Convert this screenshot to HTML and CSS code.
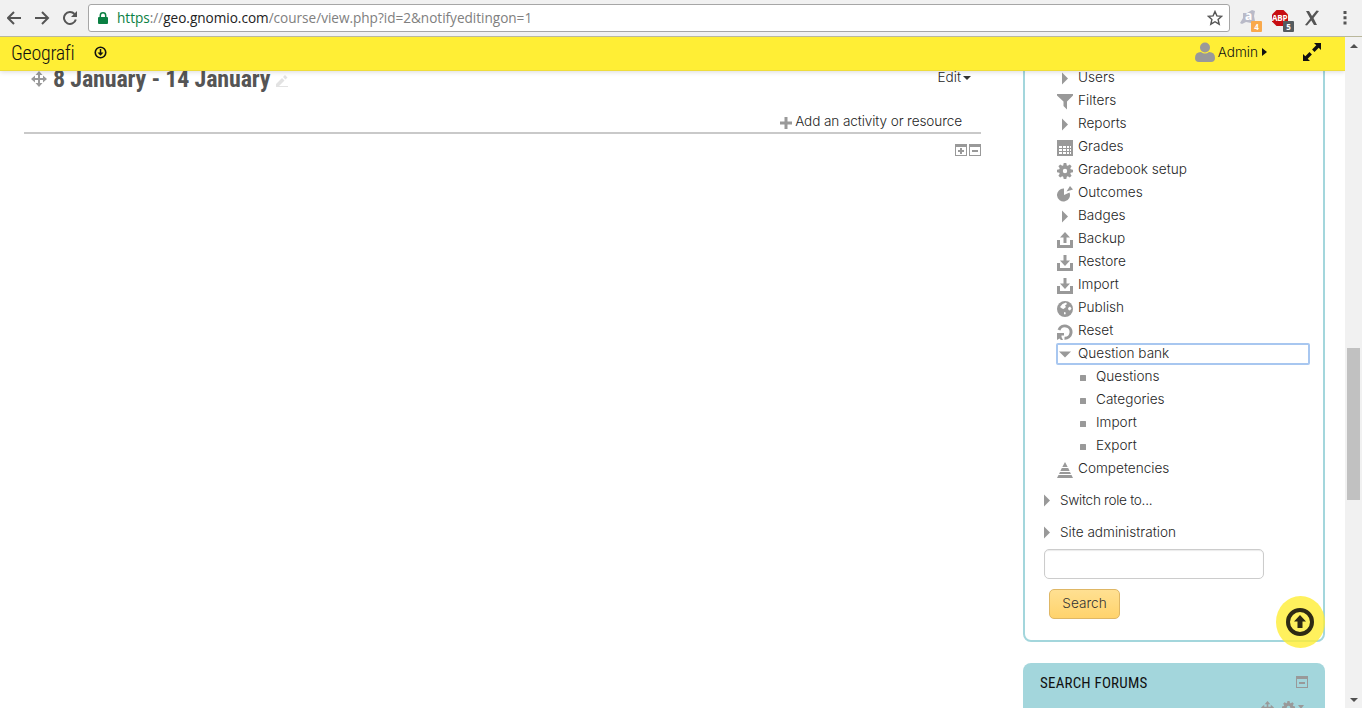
FILE: index.html
```html
<!DOCTYPE html>
<html lang="en">

<head>
  <meta charset="UTF-8">
  <title>Geografi</title>
  <link rel="stylesheet" href="styles.css">
</head>

<body>
  <svg class="symbols">
    <symbol id="right" viewBox="0 0 16 16"><path d="M5 1.500l6 6-6 6z"/></symbol>
    <symbol id="down" viewBox="0 0 16 16"><path d="M2 4.500h12L8 10.500z"/></symbol>
    <symbol id="filter" viewBox="0 0 16 16"><path d="M0 0h16v1.500l-6 6v8l-3.500-3.500V7.500L0 1.500z"/></symbol>
    <symbol id="grades" viewBox="0 0 16 16"><path fill-rule="evenodd" d="M0 0h16v16H0zM2 6v2h3V6zm4 0v2h3V6zm4 0v2h2V6zm3 0v2h1V6zM2 9v2h3V9zm4 0v2h3V9zm4 0v2h2V9zm3 0v2h1V9zM2 12v2h3v-2zm4 0v2h3v-2zm4 0v2h2v-2zm3 0v2h1v-2z"/></symbol>
    <symbol id="gear" viewBox="0 0 16 16"><path fill-rule="evenodd" d="M6.700 0h2.600l.5 2.400 1 .4 2-1.300 1.800 1.800-1.300 2 .4 1 2.300.4v2.600l-2.300.5-.4 1 1.300 2-1.800 1.800-2-1.300-1 .4-.5 2.300H6.700l-.5-2.300-1-.4-2 1.300-1.800-1.800 1.300-2-.4-1L0 9.300V6.700l2.300-.4.4-1-1.300-2 1.800-1.800 2 1.300 1-.4zM8 5.800a2.200 2.200 0 1 0 0 4.400 2.200 2.200 0 0 0 0-4.400z"/></symbol>
    <symbol id="pie" viewBox="0 0 16 16"><path d="M7 2.500V9l5.500-2.500A6.500 6.500 0 1 1 7 2.500zM9.500 5.500L13 0l3 3.500z"/></symbol>
    <symbol id="upload" viewBox="0 0 16 16"><path d="M0 8h3v5h10V8h3v8H0zM8 0l5 5.500H9.500V11h-3V5.500H3z"/></symbol>
    <symbol id="download" viewBox="0 0 16 16"><path d="M0 8h3v5h10V8h3v8H0zM8 11L3 5.500h3.500V0h3v5.500H13z"/></symbol>
    <symbol id="globe" viewBox="0 0 16 16"><circle cx="8" cy="8" r="8"/><path fill="#fff" d="M3 6l2.500-3L9 1.500l1 1.500-2 1.500 1 1.500-2.500 2L5 7.500zM11 7l2-1.500 1.500 2-1.500 2-1.500-.5zM7 11l2 .8-1 2-1-1z"/></symbol>
    <symbol id="reset" viewBox="0 0 16 16"><path fill="none" stroke="#999" stroke-width="3" d="M2 6a6.200 6.200 0 1 1 5.500 8.300"/><path d="M0 9h7v2.500H4.500V13L6 16H4l-1.500-1.500L0 16z"/></symbol>
    <symbol id="square" viewBox="0 0 16 16"><rect x="5" y="5" width="6" height="6" rx=".5"/></symbol>
    <symbol id="pyramid" viewBox="0 0 16 16"><path d="M8 0l2.700 5H5.300zM4.800 6h6.400l1.400 3H3.400zM3 10h10l1 2H2zM1.500 13h13L16 16H0z"/></symbol>
    <symbol id="move" viewBox="0 0 16 16"><path d="M8 0l3.500 4H9v3h3V4.500L16 8l-4 3.500V9H9v3h2.500L8 16l-3.500-4H7V9H4v2.500L0 8l4-3.500V7h3V4H4.500z"/></symbol>
    <symbol id="minus" viewBox="0 0 12 12"><path fill-rule="evenodd" d="M0 0h12v12H0zM1 3v8h10V3zM3 6h6v2H3z"/></symbol>
    <symbol id="plus" viewBox="0 0 12 12"><path fill-rule="evenodd" d="M0 0h12v12H0zM1 3v8h10V3zM5 4h2v2h2v2H7v2H5V8H3V6h2z"/></symbol>
  </svg>

  <div class="browser-bar">
    <svg class="nav-buttons" width="78" height="18" viewBox="0 0 78 18">
      <path d="M14 9H1M7 3L1 9l6 6M28 9h13M35 3l6 6-6 6M67.500 5a6 6 0 1 0 1.300 5.500"/>
      <path class="solid" d="M70 2v6h-6z"/>
    </svg>
    <div class="address">
      <svg width="10" height="12" viewBox="0 0 10 12"><path fill="#0b8043" d="M1 5h8q1 0 1 1v5q0 1-1 1H1q-1 0-1-1V6q0-1 1-1z"/><path fill="none" stroke="#0b8043" stroke-width="1.500" d="M2.300 6V3.500a2.700 2.700 0 0 1 5.400 0V6"/></svg>
      <div class="url"><span class="secure">https</span>://<span class="host">geo.gnomio.com</span>/course/view.php?id=2&amp;notifyeditingon=1</div>
      <svg class="star" width="16" height="16" viewBox="0 0 16 16"><path d="M8 1.500l1.900 4.400 4.800.4-3.600 3.200 1.100 4.700L8 11.700l-4.200 2.500 1.100-4.700-3.600-3.200 4.800-.4z"/></svg>
    </div>
    <div class="extensions">
      <div class="ext">
        <svg width="18" height="18" viewBox="0 0 18 18"><path fill="#b9bac8" d="M4 4l4 0 5-3 3 1-1 5 1 5-4 2-5-1-4 2-2-1 3-5z"/></svg>
        <b class="swirl">a</b><span class="badge orange">4</span>
      </div>
      <div class="ext">
        <svg width="18" height="18" viewBox="0 0 18 18"><path fill="#c70d12" d="M5.500 1h7L17 5.500v7L12.500 17h-7L1 12.500v-7z"/></svg>
        <b class="abp">ABP</b><span class="badge">5</span>
      </div>
      <svg class="x-icon" width="16" height="16" viewBox="0 0 16 16"><path d="M2 1h3l3 5L12.500.5 15 1 9.500 8l3.500 7h-3L7.300 10.500 3 15.500 1 15l5.200-6.500z"/></svg>
      <svg width="4" height="14" viewBox="0 0 4 14"><path fill="#555" d="M.5 0h3v3h-3zM.5 5.200h3v3h-3zM.5 10.500h3v3h-3z"/></svg>
    </div>
  </div>

  <div class="window">
    <div class="page">
      <div class="navbar">
        <a class="brand">Geografi</a>
        <svg class="circle-down" width="13" height="13" viewBox="0 0 26 26"><circle cx="13" cy="13" r="10.500"/><path d="M11.500 6h3v7h4.500l-6 6.500L7 13h4.500z"/></svg>
        <div class="user">
          <svg width="20" height="20" viewBox="0 0 20 20"><circle cx="10" cy="5.500" r="5"/><path d="M6 10q4 3 8 0 6 0 6 6 0 4-4 4H4q-4 0-4-4 0-6 6-6z"/></svg>
          <span>Admin</span>
          <svg class="dark" width="5" height="8" viewBox="0 0 5 8"><path d="M0 0l5 4-5 4z"/></svg>
        </div>
        <svg class="expand" width="18" height="18" viewBox="0 0 18 18"><path d="M11 0h7v7l-2.300-2.300-4.200 4.200-2.400-2.400 4.200-4.200zM0 11l2.300 2.300 4.200-4.200 2.400 2.400-4.200 4.200L7 18H0z"/></svg>
      </div>

      <div class="content">
        <main>
          <div class="section-head">
            <svg class="icon"><use href="#move"/></svg>
            <h3>8 January - 14 January</h3>
            <svg class="pencil" width="12" height="12" viewBox="0 0 12 12"><path d="M0 12V9l6-6 2.500 2.500L3 11h9v1zM7 2l2-2 2.500 2.500-2 2z"/></svg>
            <a class="edit">Edit<i class="caret"></i></a>
          </div>
          <div class="add-activity">
            <svg width="12" height="12" viewBox="0 0 12 12"><path d="M4.500 0h3v4.500H12v3H7.500V12h-3V7.500H0v-3h4.500z"/></svg>
            <a>Add an activity or resource</a>
          </div>
          <div class="toggles">
            <svg class="box"><use href="#plus"/></svg>
            <svg class="box"><use href="#minus"/></svg>
          </div>
        </main>

        <aside>
          <div class="block">
            <ul class="tree">
              <li><svg class="icon"><use href="#right"/></svg>Users</li>
              <li><svg class="icon"><use href="#filter"/></svg>Filters</li>
              <li><svg class="icon"><use href="#right"/></svg>Reports</li>
              <li><svg class="icon"><use href="#grades"/></svg>Grades</li>
              <li><svg class="icon"><use href="#gear"/></svg>Gradebook setup</li>
              <li><svg class="icon"><use href="#pie"/></svg>Outcomes</li>
              <li><svg class="icon"><use href="#right"/></svg>Badges</li>
              <li><svg class="icon"><use href="#upload"/></svg>Backup</li>
              <li><svg class="icon"><use href="#download"/></svg>Restore</li>
              <li><svg class="icon"><use href="#download"/></svg>Import</li>
              <li><svg class="icon"><use href="#globe"/></svg>Publish</li>
              <li><svg class="icon"><use href="#reset"/></svg>Reset</li>
              <li class="focused"><svg class="icon"><use href="#down"/></svg>Question bank</li>
              <li class="sub"><svg class="icon"><use href="#square"/></svg>Questions</li>
              <li class="sub"><svg class="icon"><use href="#square"/></svg>Categories</li>
              <li class="sub"><svg class="icon"><use href="#square"/></svg>Import</li>
              <li class="sub"><svg class="icon"><use href="#square"/></svg>Export</li>
              <li><svg class="icon"><use href="#pyramid"/></svg>Competencies</li>
            </ul>
            <ul class="roots">
              <li><svg class="icon"><use href="#right"/></svg><span class="tight">Switch role to...</span></li>
              <li><svg class="icon"><use href="#right"/></svg>Site administration</li>
            </ul>
            <input type="text" class="search-box">
            <button class="search-btn">Search</button>
          </div>

          <div class="block-forums">
            <div class="forums-title">
              <h2>SEARCH FORUMS</h2>
              <svg class="box"><use href="#minus"/></svg>
            </div>
            <div class="forums-actions">
              <svg><use href="#move"/></svg>
              <svg><use href="#gear"/></svg>
              <i class="caret"></i>
            </div>
          </div>
        </aside>
      </div>

      <a class="back-to-top"><svg width="28" height="28" viewBox="0 0 28 28"><circle cx="14" cy="14" r="12"/><path d="M14 7l6 6.500h-3.500V20h-5v-6.500H8z"/></svg></a>
    </div>

    <div class="scrollbar">
      <i class="arrow-up"></i>
      <div class="thumb"></div>
      <i class="arrow-down"></i>
    </div>
  </div>
</body>

</html>
```
FILE: styles.css
```css
* {
  box-sizing: border-box;
}

body {
  margin: 0;
  width: 1362px;
  height: 708px;
  overflow: hidden;
  display: flex;
  flex-direction: column;
  background: #fff;
  color: #262626;
  font: 13.6px/23px Inter, sans-serif;
  font-weight: 350;
}

ul,
h2,
h3 {
  margin: 0;
  padding: 0;
  list-style: none;
}

svg {
  flex: none;
  fill: #999;
}

.symbols {
  position: absolute;
  width: 0;
  height: 0;
}

.icon {
  width: 16px;
  height: 16px;
}

.box {
  width: 12px;
  height: 12px;
}

/* browser bar */
.browser-bar {
  flex: none;
  height: 37px;
  display: flex;
  align-items: center;
  padding-left: 7px;
  background: #f1f1f1;
  border-bottom: 1px solid #b9b79c;
}

.nav-buttons {
  margin-right: 3px;
  fill: none;
  stroke: #555;
  stroke-width: 2;
}

.nav-buttons .solid {
  fill: #555;
  stroke: none;
}

.address {
  width: 1142px;
  height: 28px;
  display: flex;
  align-items: center;
  padding: 0 6px 0 9px;
  border: 1px solid #a6a6a6;
  border-radius: 3px;
  background: #fff;
}

.url {
  flex: 1;
  margin-left: 9px;
  color: #808080;
  font: 13.6px/20px "Open Sans", sans-serif;
  letter-spacing: -0.02px;
}

.secure {
  color: #0b8043;
}

.host {
  color: #222;
}

.star {
  fill: none;
  stroke: #555;
  stroke-width: 1.4;
}

.extensions {
  display: flex;
  align-items: center;
  padding-left: 9px;
}

.ext {
  position: relative;
  width: 32px;
  height: 18px;
}

.swirl,
.abp {
  position: absolute;
  color: #fff;
  left: 6px;
  top: -1px;
  font: bold 12px/16px "Open Sans", sans-serif;
}

.abp {
  left: 1px;
  top: 1px;
  font-size: 8px;
  letter-spacing: -0.2px;
}

.badge {
  position: absolute;
  left: 12px;
  top: 12px;
  width: 11px;
  height: 11px;
  border-radius: 1px;
  background: #555b5f;
  color: #fff;
  font: bold 8px/11px "Open Sans", sans-serif;
  text-align: center;
}

.orange {
  background: #f9a94c;
}

.x-icon {
  margin: 0 29px 0 1px;
  fill: #555;
}

.extensions > svg:last-child {
  margin-left: -6px;
}

/* page */
.window {
  flex: 1;
  min-height: 0;
  display: flex;
}

.page {
  position: relative;
  width: 1345px;
  overflow: hidden;
}

.navbar {
  position: relative;
  z-index: 1;
  height: 34px;
  display: flex;
  align-items: center;
  padding: 0 24px 3px 11px;
  background: #ffee35;
  border-bottom: 1px solid #eedc3c;
  box-shadow: 0 1px 5px rgba(0, 0, 0, 0.15);
  color: #111;
}

.brand {
  width: 83px;
  padding-top: 1px;
  font: 300 20px/30px Roboto, sans-serif;
  font-stretch: 75%;
  letter-spacing: -0.3px;
}

.circle-down {
  fill: #111;
}

.circle-down circle,
.back-to-top circle {
  fill: none;
  stroke: #111;
  stroke-width: 4;
}

.circle-down circle {
  stroke-width: 3.2;
}

.user {
  flex: 1;
  display: flex;
  align-items: center;
  justify-content: flex-end;
  gap: 3px;
}

.user .dark {
  fill: #111;
  margin-left: 1px;
}

.expand {
  margin-left: 36px;
  fill: #111;
}

.content {
  display: flex;
  margin-top: -11px;
}

main {
  width: 957px;
  margin-left: 24px;
}

.section-head {
  height: 38px;
  display: flex;
  align-items: center;
  padding: 0 10px 0 7px;
}

h3 {
  margin: 0 6px 0 6px;
  color: #555;
  font: bold 24px/30px Roboto, sans-serif;
  font-stretch: 75%;
  letter-spacing: -0.16px;
}

.pencil {
  fill: #e2e2e2;
  margin-top: 4px;
}

.edit {
  margin-left: auto;
  margin-top: -3px;
}

.caret {
  display: inline-block;
  vertical-align: 2px;
  margin-left: 2px;
  border: 4px solid transparent;
  border-top-color: #333;
  border-bottom: 0;
}

.add-activity {
  height: 36px;
  display: flex;
  align-items: flex-end;
  justify-content: flex-end;
  gap: 3px;
  padding-right: 19px;
  border-bottom: 2px solid #c9c9c9;
}

.add-activity a {
  line-height: 21px;
  letter-spacing: -0.11px;
}

.add-activity svg {
  margin-bottom: 3px;
}

.toggles {
  display: flex;
  justify-content: flex-end;
  gap: 2px;
  margin-top: 10px;
}

aside {
  width: 302px;
  margin-left: 42px;
}

.block {
  height: 582px;
  padding: 4px 14px 0 19px;
  border: 2px solid #a3d6dc;
  border-radius: 8px;
}

.tree {
  padding-left: 13px;
  margin-right: -1px;
}

.tree li,
.roots li {
  display: flex;
  align-items: center;
  height: 23px;
  gap: 5px;
}

.tree .icon {
  margin-top: 2px;
}

.focused {
  position: relative;
}

.focused::before {
  content: "";
  position: absolute;
  inset: 1px 0 0 -1px;
  border: 2px solid #a8c7f0;
  border-radius: 2px;
}

.tree .sub {
  padding-left: 18px;
}

.roots {
  padding-top: 4px;
  margin-bottom: 1px;
}

.roots li {
  height: 32px;
  margin-left: -5px;
}

.roots .icon {
  margin-top: 2px;
}

.tight {
  letter-spacing: -0.3px;
}

.search-box {
  display: block;
  width: 220px;
  height: 30px;
  border: 1px solid #ccc;
  border-radius: 5px;
  box-shadow: inset 0 1px 1px rgba(0, 0, 0, 0.08);
}

.search-btn {
  display: block;
  width: 71px;
  height: 30px;
  margin: 10px 0 0 5px;
  padding: 0 0 2px;
  border: 1px solid #dfb765;
  border-radius: 5px;
  background: linear-gradient(#ffe092, #ffd36c);
  color: #333;
  font: inherit;
}

.block-forums {
  height: 80px;
  margin-top: 21px;
  padding: 10px 17px;
  border-radius: 8px;
  background: #a3d6dc;
}

.forums-title {
  display: flex;
  align-items: center;
  justify-content: space-between;
  height: 20px;
}

.forums-title .box {
  margin-top: -2px;
}

h2 {
  color: #111;
  font: 15px/20px Roboto, sans-serif;
  font-stretch: 75%;
  font-weight: 400;
  letter-spacing: 0.2px;
}

.forums-actions {
  display: flex;
  justify-content: flex-end;
  gap: 8px;
  margin: 8px 4px 0 0;
}

.forums-actions svg {
  width: 13px;
  height: 13px;
}

.forums-actions .caret {
  margin: 4px 0 0 -5px;
  border-width: 4px 3px 0;
  border-top-color: #999;
}

.back-to-top {
  position: absolute;
  right: 20px;
  bottom: 60px;
  width: 49px;
  height: 52px;
  display: flex;
  align-items: center;
  justify-content: center;
  padding-right: 1px;
  border-radius: 50%;
  background: rgba(255, 238, 53, 0.8);
}

.back-to-top svg {
  fill: #2e2a14;
}

.back-to-top circle {
  stroke: #2e2a14;
}

.scrollbar {
  width: 17px;
  display: flex;
  flex-direction: column;
  align-items: center;
  padding: 7px 0 6px;
  background: #f1f1f1;
}

.thumb {
  width: 13px;
  height: 152px;
  margin: 300px 0 auto;
  background: #c1c1c1;
}

.arrow-up,
.arrow-down {
  border: 4px solid transparent;
}

.arrow-up {
  border-top: 0;
  border-bottom-color: #505050;
}

.arrow-down {
  border-bottom: 0;
  border-top-color: #505050;
}
```
